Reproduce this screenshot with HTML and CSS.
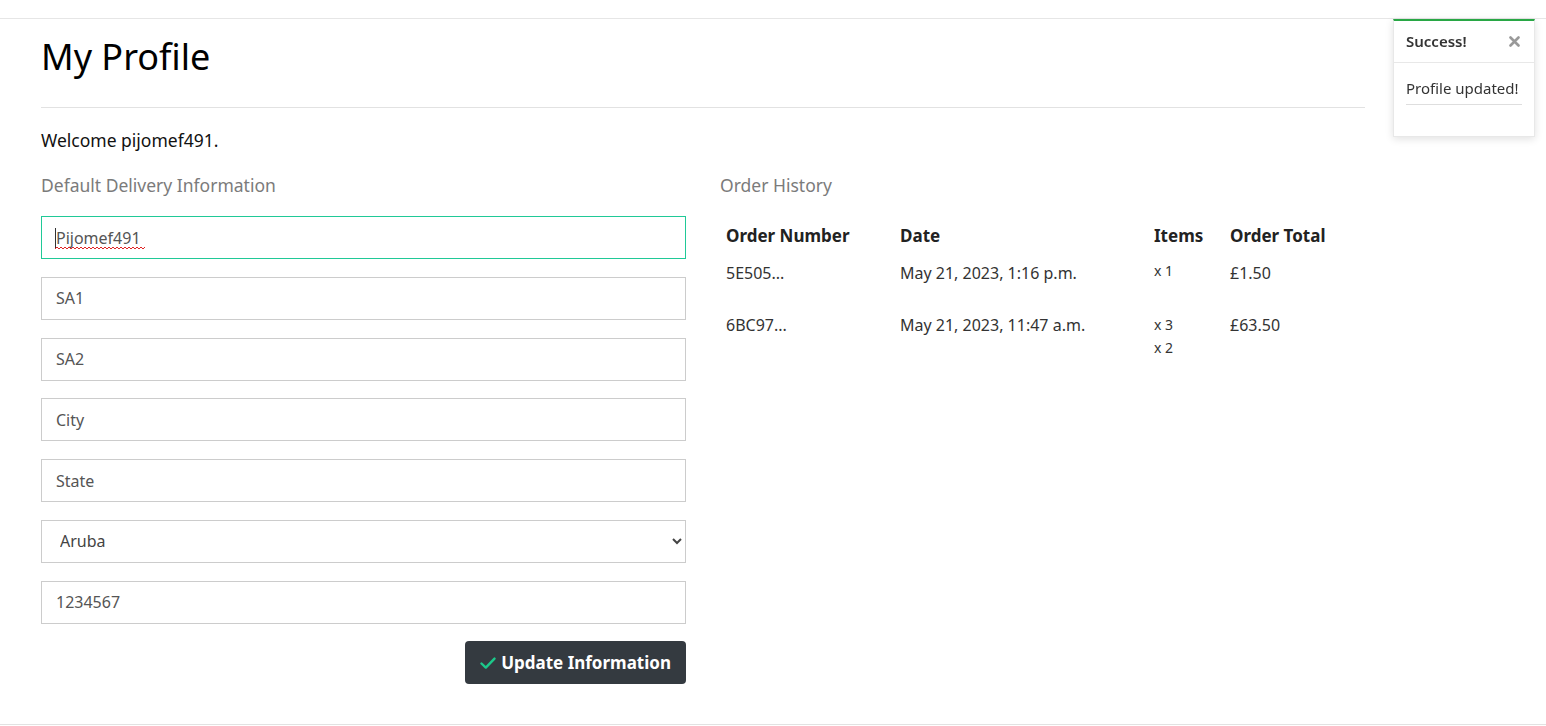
FILE: index.html
```html
<!DOCTYPE html>
<html lang="en">
<head>
<meta charset="utf-8">
<title>My Profile</title>
<link rel="stylesheet" href="styles.css">
</head>
<body>
<header class="topbar"></header>
<main class="page">
  <h1 class="title">My Profile</h1>
  <hr class="rule">
  <p class="welcome">Welcome pijomef491.</p>
  <div class="cols">
    <section class="col">
      <p class="section-label">Default Delivery Information</p>
      <form class="form">
        <div class="field-wrap">
          <input class="field field-focus" type="text" value="Pijomef491" spellcheck="false">
          <span class="caret"></span>
          <svg class="squiggle" width="90" height="4" viewBox="0 0 90 4"><polyline fill="none" stroke="#e02424" stroke-width="1" points="0,3 2,1 4,3 6,1 8,3 10,1 12,3 14,1 16,3 18,1 20,3 22,1 24,3 26,1 28,3 30,1 32,3 34,1 36,3 38,1 40,3 42,1 44,3 46,1 48,3 50,1 52,3 54,1 56,3 58,1 60,3 62,1 64,3 66,1 68,3 70,1 72,3 74,1 76,3 78,1 80,3 82,1 84,3 86,1 88,3 90,1"/></svg>
        </div>
        <input class="field" type="text" value="SA1">
        <input class="field" type="text" value="SA2">
        <input class="field" type="text" value="City">
        <input class="field" type="text" value="State">
        <select class="field field-select"><option>Aruba</option></select>
        <input class="field" type="text" value="1234567">
        <div class="actions">
          <button type="button" class="btn">
            <svg class="btn-icon" viewBox="0 0 16 16" width="16" height="16"><path d="M1.5 8.5 L5.8 12.6 L14.5 3.6" fill="none" stroke="#1cc88a" stroke-width="2.4" stroke-linecap="round" stroke-linejoin="round"/></svg>
            Update Information
          </button>
        </div>
      </form>
    </section>
    <section class="col">
      <p class="section-label">Order History</p>
      <table class="orders">
        <thead>
          <tr>
            <th class="c-num">Order Number</th>
            <th class="c-date">Date</th>
            <th class="c-items">Items</th>
            <th class="c-total">Order Total</th>
          </tr>
        </thead>
        <tbody>
          <tr>
            <td>5E505...</td>
            <td>May 21, 2023, 1:16 p.m.</td>
            <td><ul class="items"><li>x 1</li></ul></td>
            <td>£1.50</td>
          </tr>
          <tr>
            <td>6BC97...</td>
            <td>May 21, 2023, 11:47 a.m.</td>
            <td><ul class="items"><li>x 3</li><li>x 2</li></ul></td>
            <td>£63.50</td>
          </tr>
        </tbody>
      </table>
    </section>
  </div>
</main>
<footer class="footer"></footer>
<div class="toast">
  <div class="toast-head">
    <strong>Success!</strong>
    <svg class="toast-close" width="11" height="11" viewBox="0 0 11 11" aria-label="close"><path d="M1.5 1.5 L9.5 9.5 M9.5 1.5 L1.5 9.5" stroke="#999" stroke-width="2.6" stroke-linecap="round"/></svg>
  </div>
  <div class="toast-body">
    <p class="toast-msg">Profile updated!</p>
  </div>
</div>
</body>
</html>
```
FILE: styles.css
```css
* { box-sizing: border-box; }
html, body { margin: 0; padding: 0; }
body {
  font-family: "Noto Sans", "Open Sans", sans-serif;
  color: #212529;
  background: #fff;
  font-size: 16px;
  line-height: 1.5;
}
.topbar {
  height: 19px;
  border-bottom: 1px solid #e6e6e6;
}
.page {
  padding: 0 181px 0 41px;
}
.title {
  margin: 14px 0 0;
  font-size: 36px;
  font-weight: 400;
  line-height: 48px;
  color: #000;
}
.rule {
  margin: 26px 0 20px;
  border: 0;
  border-top: 1px solid #e2e2e2;
}
.welcome {
  margin: 0 0 20px;
  font-size: 17.5px;
  line-height: 24px;
  color: #111;
}
.cols {
  display: grid;
  grid-template-columns: 645px 645px;
  column-gap: 34px;
}
.section-label {
  margin: 0 0 18px;
  font-size: 17.5px;
  line-height: 26px;
  color: #7b7b7b;
}
.form {
  display: flex;
  flex-direction: column;
  gap: 17.75px;
}
.field-wrap {
  position: relative;
}
.caret {
  position: absolute;
  left: 14px;
  top: 12px;
  width: 1px;
  height: 20px;
  background: #333;
}
.squiggle {
  position: absolute;
  left: 14px;
  top: 30px;
}
.field {
  display: block;
  width: 100%;
  height: 43px;
  padding: 0 14px;
  border: 1px solid #ccc;
  border-radius: 0;
  background: #fff;
  font-family: inherit;
  font-size: 16px;
  color: #555;
  outline: none;
}
.field-focus {
  border-color: #20c997;
}
.field-select {
  padding-left: 14px;
  color: #444;
}
.actions {
  display: flex;
  justify-content: flex-end;
}
.btn {
  display: inline-flex;
  align-items: center;
  gap: 5px;
  height: 43px;
  padding: 0 15px;
  border: 0;
  border-radius: 4px;
  background: #343a40;
  color: #fff;
  font-family: inherit;
  font-size: 17px;
  font-weight: 700;
}
.btn-icon { flex: none; }
.orders {
  width: 645px;
  border-collapse: collapse;
  table-layout: fixed;
}
.orders th, .orders td {
  text-align: left;
  vertical-align: top;
  padding: 7px 6px;
}
.orders th {
  font-weight: 700;
  font-size: 17px;
  line-height: 24px;
  color: #222;
  padding-top: 8px;
  padding-bottom: 6px;
}
.orders td {
  font-size: 16px;
  line-height: 24px;
  color: #333;
  padding-bottom: 21px;
}
.c-num { width: 174px; }
.c-date { width: 254px; }
.c-items { width: 76px; }
.c-total { width: 141px; }
.items {
  list-style: none;
  margin: 0;
  padding: 0;
  font-size: 14px;
  line-height: 23px;
}
.orders tbody tr:first-child .items { margin-top: -2px; }
.footer {
  margin-top: 40px;
  border-top: 1px solid #e2e2e2;
}
.toast {
  position: fixed;
  top: 19px;
  right: 11px;
  width: 142px;
  height: 118px;
  background: #fff;
  border: 1px solid #e8e8e8;
  border-top: 2px solid #28a745;
  box-shadow: 0 2px 8px rgba(0,0,0,0.12);
  font-size: 15px;
}
.toast-head {
  display: flex;
  justify-content: space-between;
  align-items: center;
  height: 42px;
  padding: 0 14px 0 12px;
  border-bottom: 1px solid #e8e8e8;
  color: #333;
}
.toast-head strong { font-weight: 600; font-size: 15px; }
.toast-close { display: block; }
.toast-body {
  padding: 14px 12px 0;
}
.toast-msg {
  margin: 0;
  padding-bottom: 5px;
  border-bottom: 1px solid #dedede;
  color: #333;
  font-size: 15px;
  line-height: 22px;
  white-space: nowrap;
}
```
